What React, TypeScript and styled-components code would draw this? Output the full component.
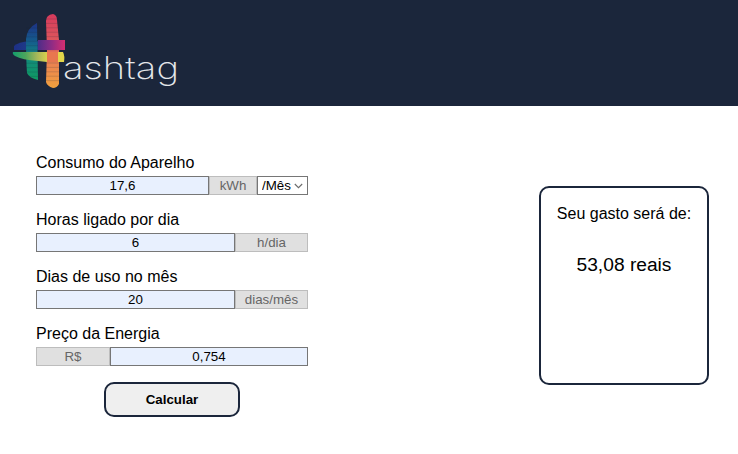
import React from "react";
import styled, { createGlobalStyle } from "styled-components";

const Global = createGlobalStyle`
  html, body { margin: 0; padding: 0; background: #fff; }
  body { font-family: "Liberation Sans", Arial, sans-serif; color: #000; }
`;

const Header = styled.header`
  height: 106px;
  background: #1b263b;
  display: flex;
  align-items: flex-start;
`;

const LogoSvg = styled.svg`
  display: block;
  width: 200px;
  height: 106px;
`;

const Wordmark = styled.text`
  font-family: Inter, "Noto Sans", sans-serif;
  font-weight: 200;
  font-size: 31px;
  fill: #e4e6ea;
`;

const Main = styled.main`
  display: flex;
  justify-content: space-between;
  align-items: flex-start;
  padding: 46px 29px 0 36px;
`;

const Form = styled.form`
  width: 272px;
  display: flex;
  flex-direction: column;
`;

const Field = styled.div`
  display: flex;
  flex-direction: column;
  height: 57px;
`;

const Label = styled.label`
  display: block;
  font-size: 16px;
  line-height: 22px;
  height: 24px;
`;

const Row = styled.div`
  display: flex;
  height: 19px;
`;

const Input = styled.input`
  flex: 1;
  min-width: 0;
  box-sizing: border-box;
  height: 19px;
  margin: 0;
  padding: 0 2px;
  border: 1px solid #767676;
  background: #e8f0fe;
  font-family: "Liberation Sans", Arial, sans-serif;
  font-size: 13.33px;
  text-align: center;
  color: #000;
  outline: none;
`;

const Addon = styled.span<{ $w: number }>`
  box-sizing: border-box;
  width: ${(p) => p.$w}px;
  height: 19px;
  background: #e0e0e0;
  border: 1px solid #bdbdbd;
  color: #666;
  font-size: 13.33px;
  line-height: 17px;
  text-align: center;
`;

const SelectWrap = styled.div`
  position: relative;
  width: 51px;
  height: 19px;
`;

const Select = styled.select`
  box-sizing: border-box;
  display: block;
  width: 100%;
  height: 19px;
  margin: 0;
  padding: 0 0 0 4px;
  appearance: none;
  border: 1px solid #767676;
  border-radius: 0;
  background: #fff;
  font-family: "Liberation Sans", Arial, sans-serif;
  font-size: 13.33px;
  color: #000;
  outline: none;
`;

const Chevron = styled.svg`
  position: absolute;
  right: 5px;
  top: 7px;
  width: 9px;
  height: 6px;
  pointer-events: none;
`;

const Button = styled.button`
  box-sizing: border-box;
  align-self: flex-start;
  margin: 2px 0 0 68px;
  width: 136px;
  height: 35px;
  border: 2px solid #1b263b;
  border-radius: 10px;
  background: #efefef;
  font-family: "Liberation Sans", Arial, sans-serif;
  font-size: 13.33px;
  font-weight: 700;
  color: #000;
`;

const Card = styled.section`
  box-sizing: border-box;
  width: 170px;
  height: 199px;
  margin-top: 34px;
  border: 2px solid #1b263b;
  border-radius: 10px;
  padding-top: 17px;
  text-align: center;
`;

const CardTitle = styled.p`
  margin: 0;
  font-size: 16px;
  line-height: 18px;
`;

const CardValue = styled.p`
  margin: 31px 0 0;
  font-size: 19.2px;
  line-height: 22px;
`;

const Stripes = ({ x, y1, y2, w }: { x: number; y1: number; y2: number; w: number }) => {
  const ys: number[] = [];
  for (let y = y1; y < y2; y += 4.4) ys.push(y);
  return (
    <g stroke="#1b263b" strokeOpacity="0.22" strokeWidth="0.8">
      {ys.map((y) => (
        <line key={y} x1={x} x2={x + w} y1={y} y2={y} />
      ))}
    </g>
  );
};

const Logo = () => (
  <LogoSvg viewBox="0 0 200 106" role="img" aria-label="Hashtag">
    <defs>
      <linearGradient id="lv" x1="0" y1="0" x2="0" y2="1">
        <stop offset="0" stopColor="#1d3286" />
        <stop offset="0.35" stopColor="#14608c" />
        <stop offset="0.6" stopColor="#128a7c" />
        <stop offset="1" stopColor="#0f9a62" />
      </linearGradient>
      <linearGradient id="rv" x1="0" y1="0" x2="0" y2="1">
        <stop offset="0" stopColor="#d63a5c" />
        <stop offset="0.4" stopColor="#de5a5c" />
        <stop offset="0.65" stopColor="#ea8152" />
        <stop offset="1" stopColor="#f0a03e" />
      </linearGradient>
      <linearGradient id="ut" x1="0" y1="0" x2="1" y2="0">
        <stop offset="0" stopColor="#1d2f86" />
        <stop offset="1" stopColor="#1f4488" />
      </linearGradient>
      <linearGradient id="uh" x1="0" y1="0" x2="1" y2="0">
        <stop offset="0" stopColor="#4e2d88" />
        <stop offset="0.5" stopColor="#8e2c85" />
        <stop offset="1" stopColor="#d62e70" />
      </linearGradient>
      <linearGradient id="lh" x1="0" y1="0" x2="1" y2="0">
        <stop offset="0" stopColor="#129e6c" />
        <stop offset="0.38" stopColor="#4ea65c" />
        <stop offset="0.72" stopColor="#a7b85a" />
        <stop offset="1" stopColor="#d8d04c" />
      </linearGradient>
    </defs>
    <path d="M14 46 Q18 42 30 41 L38 41 L38 50 L14 50 Z" fill="url(#ut)" />
    <path d="M26 39 Q27 28 37 23 L38 80 Q29 78 27 73 Q26 60 26 39 Z" fill="url(#lv)" />
    <Stripes x={26} y1={28} y2={78} w={12} />
    <path d="M46 21 Q46 15 53 14 Q57 15 57 20 L59 40 L59 84 Q57 88 53 88 Q47 86 46 82 L47 50 Z" fill="url(#rv)" />
    <Stripes x={46} y1={19} y2={85} w={13} />
    <path d="M38 40 L65 40 L65 50 L38 50 Z" fill="url(#uh)" />
    <path d="M13 52 L47 52 L47 62 L38 61 Q22 60 15 56 Q12 54 13 52 Z" fill="url(#lh)" />
    <path d="M58 52 L63 52 Q65 56 64 62 L58 62 Z" fill="#e3d64a" />
    <path d="M47 52 L58 52 L58 62 L47 62 Z" fill="#e8774f" />
    <Wordmark x="63" y="79" textLength="116" lengthAdjust="spacingAndGlyphs">ashtag</Wordmark>
  </LogoSvg>
);

export default function App() {
  return (
    <>
      <Global />
      <Header>
        <Logo />
      </Header>
      <Main>
        <Form onSubmit={(e) => e.preventDefault()}>
          <Field>
            <Label>Consumo do Aparelho</Label>
            <Row>
              <Input defaultValue="17,6" />
              <Addon $w={48}>kWh</Addon>
              <SelectWrap>
                <Select defaultValue="mes">
                  <option value="mes">/Mês</option>
                  <option value="dia">/Dia</option>
                </Select>
                <Chevron viewBox="0 0 9 6" aria-hidden="true">
                  <path d="M0.8 1 L4.5 4.7 L8.2 1" fill="none" stroke="#6b6b6b" strokeWidth="1.1" />
                </Chevron>
              </SelectWrap>
            </Row>
          </Field>
          <Field>
            <Label>Horas ligado por dia</Label>
            <Row>
              <Input defaultValue="6" />
              <Addon $w={73}>h/dia</Addon>
            </Row>
          </Field>
          <Field>
            <Label>Dias de uso no mês</Label>
            <Row>
              <Input defaultValue="20" />
              <Addon $w={73}>dias/mês</Addon>
            </Row>
          </Field>
          <Field>
            <Label>Preço da Energia</Label>
            <Row>
              <Addon $w={74}>R$</Addon>
              <Input defaultValue="0,754" />
            </Row>
          </Field>
          <Button type="button">Calcular</Button>
        </Form>
        <Card>
          <CardTitle>Seu gasto será de:</CardTitle>
          <CardValue>53,08 reais</CardValue>
        </Card>
      </Main>
    </>
  );
}
